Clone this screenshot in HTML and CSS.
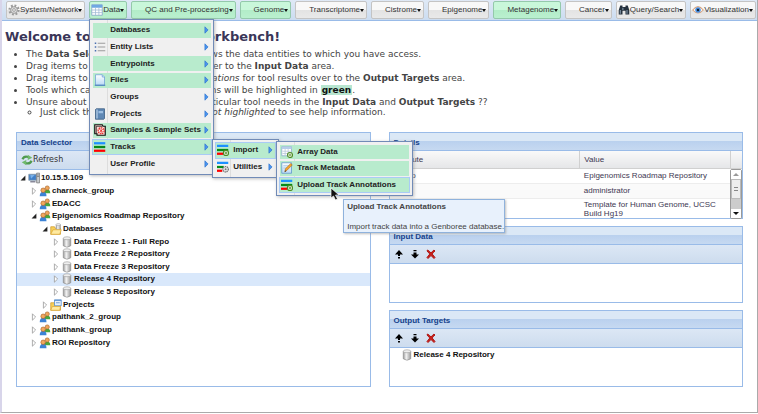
FILE: index.html
```html
<!DOCTYPE html>
<html lang="en">
<head>
<meta charset="utf-8">
<title>Genboree Workbench</title>
<link rel="stylesheet" href="styles.css">
</head>
<body>
<svg class="defs" aria-hidden="true">
  <defs>
    <linearGradient id="metal" x2="1"><stop offset="0" stop-color="#999"/><stop offset=".4" stop-color="#f4f4f4"/><stop offset="1" stop-color="#999"/></linearGradient>
    <linearGradient id="paper" y2="1" x2="0"><stop offset="0" stop-color="#fff"/><stop offset="1" stop-color="#b9daf6"/></linearGradient>
  </defs>
  <symbol id="gear" viewBox="0 0 16 16"><circle cx="8" cy="8" r="6" fill="none" stroke="#999" stroke-width="3" stroke-dasharray="2.4 2.3"/><circle cx="8" cy="8" r="4.5" fill="#ddd" stroke="#888"/><circle cx="8" cy="8" r="1.8" fill="#fff" stroke="#888"/></symbol>
  <symbol id="grid" viewBox="0 0 16 16"><path d="M1 1h14v14H1z" fill="#fff" stroke="#7f9fc4"/><path d="M1 1h14v4H1z" fill="#6fa8e2"/><path d="M1 8h14M1 11.5h14M6 5v10M10.500 5v10" stroke="#9fb8d4"/></symbol>
  <symbol id="binoculars" viewBox="0 0 16 16"><path d="M3 2h3v2h4V2h3l2 6v6h-5V9H6v5H1V8z" fill="#26323e"/><path d="M3 8v5M12 8v5M6.500 5v3" stroke="#8fa5b8" stroke-width="1.300"/></symbol>
  <symbol id="eye" viewBox="0 0 16 16"><path d="M1 8q7-9 14 0-7 8-14 0z" fill="#fff" stroke="#d9a37c" stroke-width="1.500"/><circle cx="8" cy="8" r="3.700" fill="#4b8fe0"/><circle cx="8" cy="8" r="1.600" fill="#123"/></symbol>
  <symbol id="list" viewBox="0 0 16 16"><path d="M5 3h10M5 8h10M5 13h10" stroke="#999" stroke-width="1.300"/><path d="M1 3h2M1 8h2M1 13h2" stroke="#4a6fb0" stroke-width="2"/></symbol>
  <symbol id="file" viewBox="0 0 16 16"><path d="M2 1h9l3 3v11H2z" fill="url(#paper)" stroke="#6c9fd6"/><path d="M11 1v3h3" fill="#d5e8fa" stroke="#6c9fd6"/><path d="M1 15h14" stroke="#4d83bd" stroke-width="1.500"/></symbol>
  <symbol id="book" viewBox="0 0 16 16"><path d="M2 2l1-1h11v13l-1 1H2z" fill="#5f88b5" stroke="#35597f"/><path d="M4 2v12" stroke="#cfe0f2" stroke-width="1.300"/><path d="M6 4h6v3H6z" fill="#9dbfe2"/></symbol>
  <symbol id="samples" viewBox="0 0 16 16"><path d="M1 1h10l1 2h3v12H4v-2H1z" fill="#f8d9d2" stroke="#111" stroke-width="1.500"/><path d="M3 3v10M3 3h8" stroke="#111"/><circle cx="9.500" cy="9" r="4" fill="#fff" stroke="#e52420" stroke-width="1.600" stroke-dasharray="2 1"/><path d="M7 7l5 4M12 7l-5 4M9.500 5v8" stroke="#e52420"/></symbol>
  <symbol id="tracks" viewBox="0 0 16 16"><path d="M0 3h15" stroke="#1e90ff" stroke-width="3"/><path d="M0 8h15" stroke="#078a19" stroke-width="3"/><path d="M0 13h15" stroke="#f00" stroke-width="3"/></symbol>
  <symbol id="track-add" viewBox="0 0 16 16"><path d="M0 2.500h15" stroke="#1e90ff" stroke-width="3"/><path d="M0 8h15" stroke="#078a19" stroke-width="3"/><path d="M0 13h9" stroke="#f00" stroke-width="3"/><circle cx="12" cy="12" r="3.500" fill="#fff" stroke="#4e8c23" stroke-width="1.500"/><path d="M10 12h4M12 10v4" stroke="#4e8c23" stroke-width="1.300"/></symbol>
  <symbol id="track-gear" viewBox="0 0 16 16"><path d="M0 2.500h15" stroke="#1e90ff" stroke-width="3"/><path d="M0 8h9" stroke="#078a19" stroke-width="3"/><path d="M0 13h7" stroke="#f00" stroke-width="3"/><circle cx="11.500" cy="11" r="3.600" fill="#eee" stroke="#777" stroke-width="1.800" stroke-dasharray="1.800 .8"/><circle cx="11.500" cy="11" r="1.300" fill="#777"/></symbol>
  <symbol id="grid-add" viewBox="0 0 16 16"><path d="M1 1h13v12H1z" fill="#fff" stroke="#8aa8cc"/><path d="M1 1h13v3H1z" fill="#b6cdea"/><path d="M2 7h11M2 10h11M5.500 4v9M9.500 4v9" stroke="#b7c7da"/><circle cx="12" cy="12" r="3.300" fill="#fff" stroke="#4e8c23" stroke-width="1.500"/><path d="M10 12h4M12 10v4" stroke="#4e8c23"/></symbol>
  <symbol id="edit" viewBox="0 0 16 16"><path d="M1 1h13v14H1z" fill="url(#paper)" stroke="#5c93cc"/><path d="M3 5h8M3 8h5" stroke="#9bbcdd"/><path d="M5 13l1-4 7-7 2 2-7 7z" fill="#f5a52b" stroke="#a86a1c" stroke-width=".8"/><path d="M5 13l.5-2 1.500 1.500z" fill="#333"/></symbol>
  <symbol id="refresh" viewBox="0 0 16 16"><path d="M2 7q2-5 8-3" fill="none" stroke="#4f9a4f" stroke-width="3"/><path d="M9 1l6 4-6 3z" fill="#6fb96c"/><path d="M14 9q-2 5-8 3" fill="none" stroke="#4f9a4f" stroke-width="3"/><path d="M7 15l-6-4 6-3z" fill="#6fb96c"/></symbol>
  <symbol id="server" viewBox="0 0 16 16"><path d="M1 3h10v8H1z" fill="#3f7fc8" stroke="#8a99a8"/><path d="M3 4l6 0-5 5z" fill="#79b0e8"/><path d="M3 13h7" stroke="#889" stroke-width="2"/><path d="M11.500 1.500h4v13h-4z" fill="#c8ccd0" stroke="#777"/><path d="M12 4h3M12 6h3" stroke="#777"/></symbol>
  <symbol id="users" viewBox="0 0 16 16"><path d="M7 11q0-5 4-5t4 5z" fill="#49a53e"/><circle cx="11" cy="4" r="2.800" fill="#f0a55b" stroke="#a05a20" stroke-width=".8"/><path d="M1 15q0-6 4.500-6t4.500 6z" fill="#3c83d6"/><circle cx="5.500" cy="7" r="3" fill="#f2a85f" stroke="#a3591c" stroke-width=".8"/></symbol>
  <symbol id="db-folder" viewBox="0 0 16 16"><path d="M1 5h5l1 2h7v8H1z" fill="#f7cf58" stroke="#cf9a2c"/><path d="M8 2v6q3 2 6 0V2" fill="url(#metal)" stroke="#999" stroke-width=".6"/><ellipse cx="11" cy="2" rx="3" ry="1.300" fill="#eee" stroke="#999" stroke-width=".6"/><path d="M1 15l3-6h11l-2 6z" fill="#ffeaa0" stroke="#dba93c"/></symbol>
  <symbol id="project-folder" viewBox="0 0 16 16"><path d="M1 5h5l1 2h7v8H1z" fill="#f7cf58" stroke="#cf9a2c"/><path d="M6 1h9v8H6z" fill="#e4f0fd" stroke="#4d86c8"/><path d="M6 2h9M8 5h5" stroke="#4d86c8"/><path d="M1 15l2-5h11l-1 5z" fill="#ffeaa0" stroke="#dba93c"/></symbol>
  <symbol id="db" viewBox="0 0 16 16"><path d="M3 3v10q5 4 10 0V3" fill="url(#metal)" stroke="#888" stroke-width=".8"/><ellipse cx="8" cy="3" rx="5" ry="2" fill="#eee" stroke="#999" stroke-width=".8"/></symbol>
  <symbol id="open" viewBox="0 0 10 10"><path d="M8 2v6H2z" fill="#222"/></symbol>
  <symbol id="closed" viewBox="0 0 10 10"><path d="M3 1l4 4-4 4z" fill="#fff" stroke="#999"/></symbol>
  <symbol id="up" viewBox="0 0 10 10"><path d="M5 1L1 5.500h3V7h2V5.500h3zM4 8h2v1.500H4z"/></symbol>
  <symbol id="down" viewBox="0 0 10 10"><path d="M5 9.500L1 5.500h2.500V3.500h3v2H9zM3.500 1h3v1.300h-3z"/></symbol>
  <symbol id="remove" viewBox="0 0 10 10"><path d="M1.500 1q2 1 3.500 3Q6.500 2 8 1l1 1Q7.500 3 6.200 5L9 8.500 8 9.500 5 6.500 2 9.500l-1-1L3.800 5 1 2z" fill="#c8201c" stroke="#b01a16" stroke-width="1"/></symbol>
  <symbol id="sub" viewBox="0 0 6 10"><path d="M1 1l4 4-4 4z" fill="#4a94ee" stroke="#2a70cc" stroke-width=".8"/></symbol>
</svg>

<div class="app">
  <nav class="toolbar" aria-label="Tools">
    <button class="tool has-icon"><svg class="icon"><use href="#gear"/></svg>System/Network</button>
    <div class="anchor">
      <button class="tool has-icon green" aria-expanded="true"><svg class="icon"><use href="#grid"/></svg>Data</button>
      <div class="menu menu-data">
        <button class="item green"><span>Databases</span><svg class="more"><use href="#sub"/></svg></button>
        <button class="item"><svg class="icon"><use href="#list"/></svg><span>Entity Lists</span><svg class="more"><use href="#sub"/></svg></button>
        <button class="item green"><span>Entrypoints</span><svg class="more"><use href="#sub"/></svg></button>
        <button class="item green"><svg class="icon"><use href="#file"/></svg><span>Files</span><svg class="more"><use href="#sub"/></svg></button>
        <button class="item"><span>Groups</span><svg class="more"><use href="#sub"/></svg></button>
        <button class="item"><svg class="icon"><use href="#book"/></svg><span>Projects</span><svg class="more"><use href="#sub"/></svg></button>
        <button class="item green"><svg class="icon"><use href="#samples"/></svg><span>Samples &amp; Sample Sets</span><svg class="more"><use href="#sub"/></svg></button>
        <button class="item green active"><svg class="icon"><use href="#tracks"/></svg><span>Tracks</span><svg class="more"><use href="#sub"/></svg></button>
        <button class="item"><span>User Profile</span><svg class="more"><use href="#sub"/></svg></button>
      </div>
      <div class="menu menu-tracks">
        <button class="item green active"><svg class="icon"><use href="#track-add"/></svg><span>Import</span><svg class="more"><use href="#sub"/></svg></button>
        <button class="item"><svg class="icon"><use href="#track-gear"/></svg><span>Utilities</span><svg class="more"><use href="#sub"/></svg></button>
      </div>
      <div class="menu menu-import">
        <button class="item green"><svg class="icon"><use href="#grid-add"/></svg><span>Array Data</span></button>
        <button class="item green"><svg class="icon"><use href="#edit"/></svg><span>Track Metadata</span></button>
        <button class="item green active"><svg class="icon"><use href="#track-add"/></svg><span>Upload Track Annotations</span></button>
      </div>
      <div class="tooltip" role="tooltip"><strong>Upload Track Annotations</strong><p>Import track data into a Genboree database.</p></div>
      <svg class="pointer" viewBox="0 0 10 14"><path d="M1 1v10l2.500-2 2 4 2-1-2-4H9z" fill="#111" stroke="#fff" stroke-width=".7"/></svg>
    </div>
    <button class="tool green">QC and Pre-processing</button>
    <button class="tool green">Genome</button>
    <button class="tool">Transcriptome</button>
    <button class="tool">Cistrome</button>
    <button class="tool">Epigenome</button>
    <button class="tool green">Metagenome</button>
    <button class="tool">Cancer</button>
    <button class="tool has-icon"><svg class="icon"><use href="#binoculars"/></svg>Query/Search</button>
    <button class="tool has-icon"><svg class="icon"><use href="#eye"/></svg>Visualization</button>
  </nav>

  <section class="intro">
    <h1>Welcome to the Genomic Workbench!</h1>
    <ul>
      <li>The <b>Data Selector</b> tree (on the left) shows the data entities to which you have access.</li>
      <li>Drag items to be used for tools' inputs over to the <b>Input Data</b> area.</li>
      <li>Drag items to be used as resulting <i>destinations</i> for tool results over to the <b>Output Targets</b> area.</li>
      <li>Tools which can be used for your selections will be highlighted in <b class="mark">green</b>.</li>
      <li>Unsure about what kinds of entities a particular tool needs in the <b>Input Data</b> and <b>Output Targets</b> ??
        <ul><li>Just click the tool while the button is <i>not highlighted</i> to see help information.</li></ul>
      </li>
    </ul>
  </section>

  <main class="panels">
    <section class="panel selector">
      <h2>Data Selector</h2>
      <div class="bar"><button class="refresh"><svg class="icon"><use href="#refresh"/></svg>Refresh</button></div>
      <ul class="tree">
        <li class="l0"><svg class="twist"><use href="#open"/></svg><svg class="icon"><use href="#server"/></svg>10.15.5.109</li>
        <li class="l1"><svg class="twist"><use href="#closed"/></svg><svg class="icon"><use href="#users"/></svg>charneck_group</li>
        <li class="l1"><svg class="twist"><use href="#closed"/></svg><svg class="icon"><use href="#users"/></svg>EDACC</li>
        <li class="l1"><svg class="twist"><use href="#open"/></svg><svg class="icon"><use href="#users"/></svg>Epigenomics Roadmap Repository</li>
        <li class="l2"><svg class="twist"><use href="#open"/></svg><svg class="icon"><use href="#db-folder"/></svg>Databases</li>
        <li class="l3"><svg class="twist"><use href="#closed"/></svg><svg class="icon"><use href="#db"/></svg>Data Freeze 1 - Full Repo</li>
        <li class="l3"><svg class="twist"><use href="#closed"/></svg><svg class="icon"><use href="#db"/></svg>Data Freeze 2 Repository</li>
        <li class="l3"><svg class="twist"><use href="#closed"/></svg><svg class="icon"><use href="#db"/></svg>Data Freeze 3 Repository</li>
        <li class="l3 selected"><svg class="twist"><use href="#closed"/></svg><svg class="icon"><use href="#db"/></svg>Release 4 Repository</li>
        <li class="l3"><svg class="twist"><use href="#closed"/></svg><svg class="icon"><use href="#db"/></svg>Release 5 Repository</li>
        <li class="l2"><svg class="twist"><use href="#closed"/></svg><svg class="icon"><use href="#project-folder"/></svg>Projects</li>
        <li class="l1"><svg class="twist"><use href="#closed"/></svg><svg class="icon"><use href="#users"/></svg>paithank_2_group</li>
        <li class="l1"><svg class="twist"><use href="#closed"/></svg><svg class="icon"><use href="#users"/></svg>paithank_group</li>
        <li class="l1"><svg class="twist"><use href="#closed"/></svg><svg class="icon"><use href="#users"/></svg>ROI Repository</li>
      </ul>
    </section>

    <div class="column">
      <section class="panel details">
        <h2>Details</h2>
        <table>
          <thead><tr><th>Attribute</th><th>Value</th><th class="scroll-col"></th></tr></thead>
          <tbody>
            <tr><td>Group</td><td>Epigenomics Roadmap Repository</td>
              <td class="scroll-col" rowspan="3"><div class="scrollbar"><span class="arrow-up"></span><span class="thumb"></span><span class="arrow-down"></span></div></td></tr>
            <tr class="alt"><td>Role</td><td>administrator</td></tr>
            <tr><td>Description</td><td>Template for Human Genome, UCSC<br>Build Hg19</td></tr>
          </tbody>
        </table>
      </section>
      <section class="panel target">
        <h2>Input Data</h2>
        <div class="bar"><button class="act" aria-label="Move up"><svg><use href="#up"/></svg></button><button class="act" aria-label="Move down"><svg><use href="#down"/></svg></button><button class="act" aria-label="Remove"><svg><use href="#remove"/></svg></button></div>
      </section>
      <section class="panel target">
        <h2>Output Targets</h2>
        <div class="bar"><button class="act" aria-label="Move up"><svg><use href="#up"/></svg></button><button class="act" aria-label="Move down"><svg><use href="#down"/></svg></button><button class="act" aria-label="Remove"><svg><use href="#remove"/></svg></button></div>
        <div class="entry"><svg class="icon"><use href="#db"/></svg>Release 4 Repository</div>
      </section>
    </div>
  </main>
</div>
</body>
</html>
```
FILE: styles.css
```css
* { box-sizing: border-box; }
body { margin: 0; background: #fff; font: 8px/10px "Liberation Sans", sans-serif; color: #333; }
button { font: inherit; color: inherit; border: 0; background: none; padding: 0; margin: 0; }
svg { display: block; flex: none; }
.defs { position: absolute; width: 0; height: 0; }
.icon { width: 12px; height: 12px; }

.app { min-height: 413px; border-left: 2px solid #d8d5ea; border-right: 1px solid #aaa; border-bottom: 1px solid #aaa; }

.toolbar { display: flex; justify-content: space-between; gap: 3px; height: 21px; padding: 1px 1px 1px 4px; background: linear-gradient(#dfe9f6, #cbdcf0); border-bottom: 1px solid #99bbe8; }
.tool { display: flex; align-items: center; height: 18px; padding: 0 2px 0 13px; white-space: nowrap; border: 1px solid #c4c4c4; border-radius: 2px; background: linear-gradient(#f8f8f8 50%, #e3e3e3 50%, #e9e9e9); }
.tool::after { content: ""; border: 2px solid transparent; border-top: 3px solid #111; border-bottom: 0; }
.tool.has-icon { padding-left: 1px; }
.tool.green { background: linear-gradient(#c9f7da 50%, #b2ecc8 50%, #baf0cf); border-color: #94c9ab; }

.anchor { position: relative; }
.menu { position: absolute; z-index: 2; display: grid; grid-auto-rows: 1fr; padding: 2px; border: 1px solid #718bb7; box-shadow: 1px 1px 3px #8888; background: linear-gradient(90deg, #f0f0f0 17px, #ddd 17px, #ddd 18px, #f0f0f0 18px); }
.menu-data { left: 0; top: 18px; width: 125px; height: 156px; }
.menu-tracks { left: 123px; top: 138px; width: 67px; height: 39px; }
.menu-import { left: 187px; top: 140px; width: 137px; height: 55px; }
.item { display: grid; grid-template-columns: 13px 1fr 6px; gap: 3px; align-items: center; padding: 0 1px; text-align: left; font-weight: bold; color: #222; white-space: nowrap; border: 1px solid transparent; background-clip: padding-box; }
.item span { grid-column: 2; }
.item.green { background-color: #b8ebcd; }
.item.active { border-color: #a9cbf5; }
.more { width: 5px; height: 8px; }
.tooltip { position: absolute; z-index: 3; left: 254px; top: 198px; width: 162px; height: 34px; padding: 2px 3px; border: 1px solid #8fb2dc; background: #e8f1fc; box-shadow: 1px 1px 2px #8888; color: #444; white-space: nowrap; }
.tooltip p { margin: 10px 0 0; }
.tooltip strong { display: block; }
.pointer { position: absolute; z-index: 4; left: 241px; top: 186px; width: 10px; height: 14px; }

.intro { padding: 9px 3px 0; font: 9px/12px "DejaVu Sans", sans-serif; color: #444; }
.intro h1 { margin: 0 0 4px; font-size: 13px; line-height: 14px; color: #3a3658; }
.intro ul { margin: 0; padding-left: 21px; }
.intro li { white-space: nowrap; }
.intro ul ul { padding-left: 14px; line-height: 9px; }
.mark { background: #b8e6d0; color: #111; padding: 0 1px; }

.panels { display: grid; grid-template-columns: 1fr 1fr; gap: 18px; padding: 15px 14px 25px; }
.column { display: grid; gap: 7px; grid-template-rows: 87px 77px 77px; }
.panel { border: 1px solid #99bbe8; min-width: 0; }
h2 { margin: 0; height: 18px; padding: 0 4px; font-size: 8px; line-height: 19px; color: #15428b; background: linear-gradient(#dbe8f6 45%, #b9d0ee 45%, #c6d9f1); border-bottom: 1px solid #99bbe8; }
.bar { display: flex; align-items: center; gap: 6px; height: 19px; padding: 0 4px; background: linear-gradient(#dce7f5, #cddcee); border-bottom: 1px solid #99bbe8; }
.refresh { display: flex; align-items: center; font: 8px/10px "DejaVu Sans", sans-serif; }
.act svg { width: 10px; height: 10px; }
.tree { display: grid; grid-auto-rows: 1fr; height: 177px; margin: 2px 0 0; padding: 0; list-style: none; color: #111; font-weight: bold; }
.tree li { display: flex; align-items: center; gap: 1px; }
.twist { width: 8px; height: 8px; }
.l0 { padding-left: 2px; }
.l1 { padding-left: 13px; }
.l2 { padding-left: 24px; }
.l3 { padding-left: 35px; }
.selected { background: #d9e8fb; }
.entry { display: flex; align-items: center; gap: 1px; padding: 1px 11px; color: #111; font-weight: bold; }

table { width: 100%; border-collapse: collapse; table-layout: fixed; color: #3d3852; }
th, td { padding: 0 4px; text-align: left; vertical-align: middle; font-weight: normal; line-height: 9px; white-space: nowrap; }
th { height: 17px; border-right: 1px solid #d0d0d0; border-bottom: 1px solid #d0d0d0; background: linear-gradient(#f9f9f9, #e5e6e8); }
th:first-child { width: 54%; }
.scroll-col { width: 12px; padding: 0; border-right: 0; }
tbody tr { height: 15px; }
.alt td { background: #fafafa; border: solid #ededed; border-width: 1px 0; }
tbody tr:last-child { height: 21px; }
.scrollbar { display: flex; flex-direction: column; align-items: center; justify-content: space-between; height: 50px; border: 1px solid #999; border-radius: 2px; background: #ccc; }
.scrollbar span { width: 100%; background: #fff; }
.arrow-up::before, .arrow-down::before { content: ""; display: block; width: 0; margin: 3px auto; border: 3px solid transparent; }
.arrow-up::before { border-bottom-color: #999; border-top: 0; }
.arrow-down::before { border-top-color: #111; border-bottom: 0; }
.thumb { flex: none; height: 20px; margin-bottom: auto; border: 1px solid #bbb; background: linear-gradient(#888, #888) center 7px / 4px 1px no-repeat, linear-gradient(#888, #888) center 10px / 4px 1px no-repeat, #eee !important; }
```
